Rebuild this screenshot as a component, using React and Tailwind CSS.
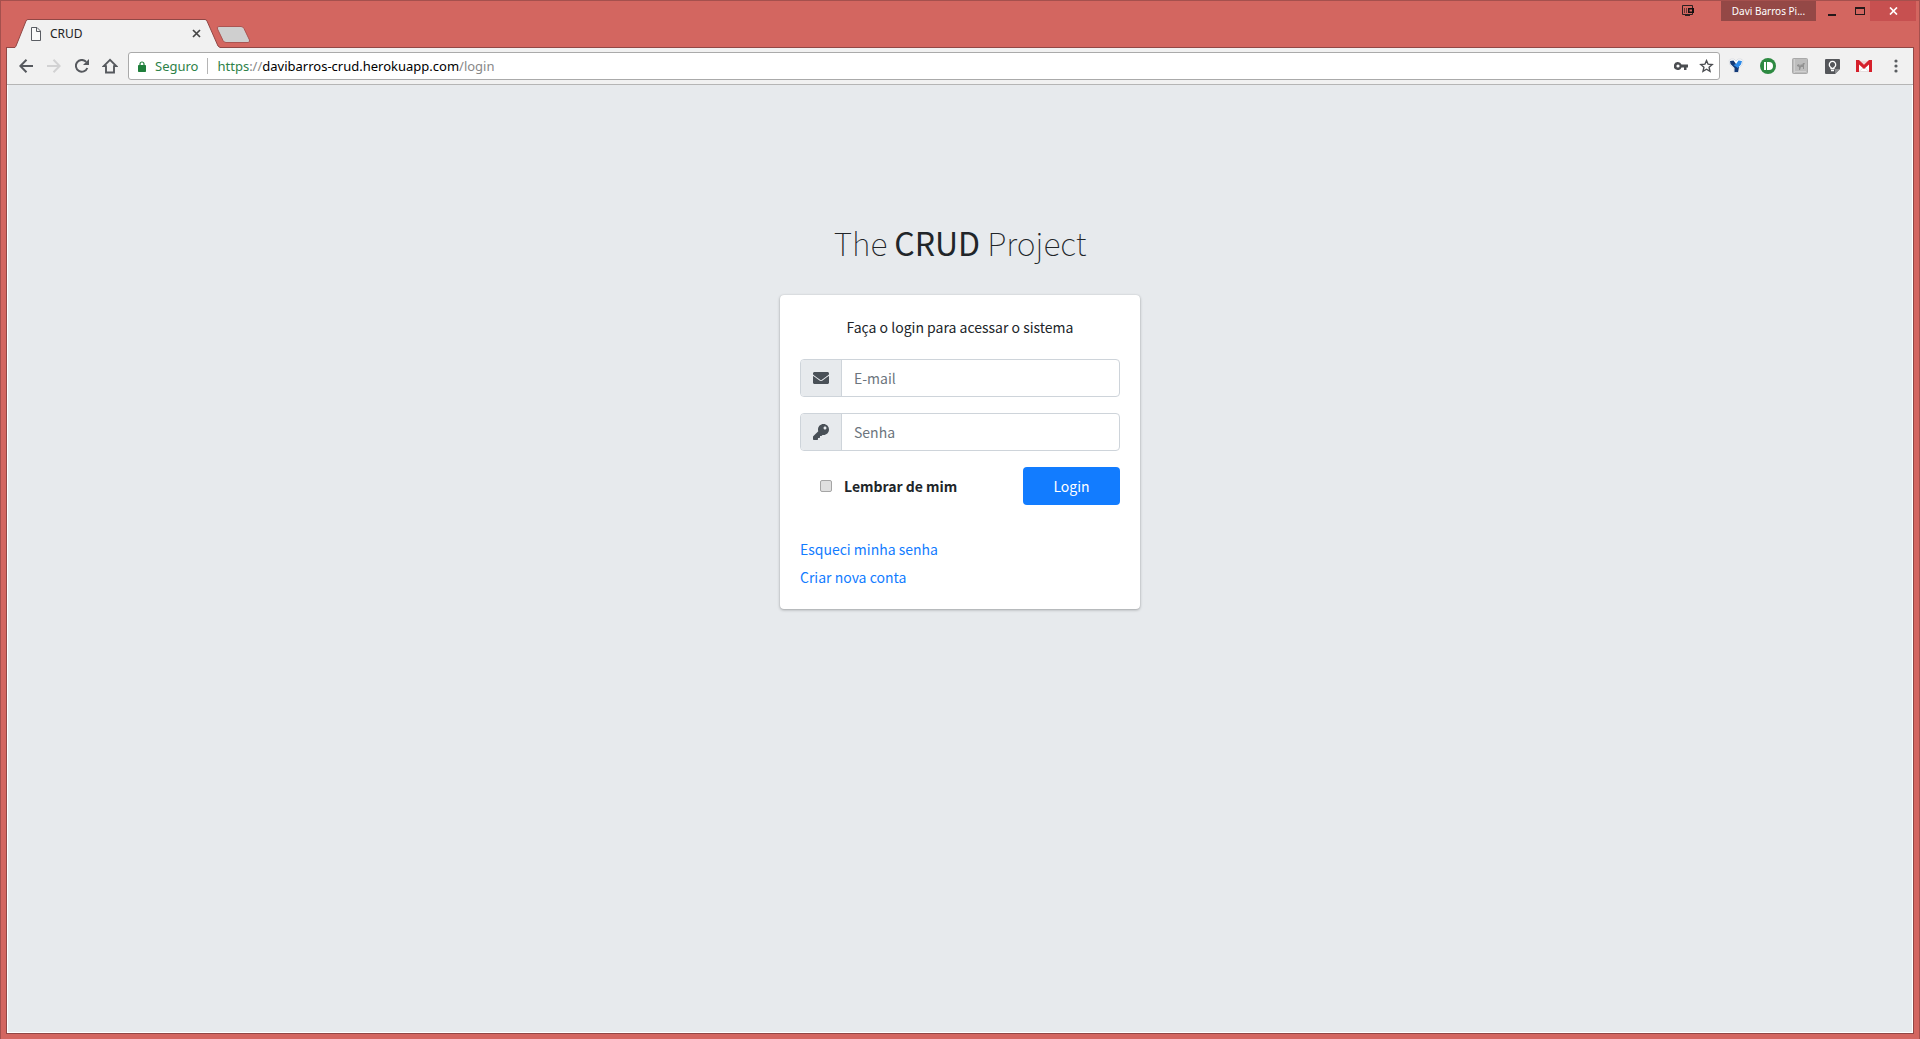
import React from "react";

const ui = "font-['Noto_Sans','Open_Sans',sans-serif]";
const body = "font-['Noto_Sans_CJK_SC',sans-serif]";

function IconButton({ label, children, className = "" }) {
  return (
    <button type="button" aria-label={label} className={"flex h-7 w-7 shrink-0 items-center justify-center " + className}>
      {children}
    </button>
  );
}

function TabStrip() {
  return (
    <header className={"flex h-[47px] shrink-0 items-start justify-between " + ui}>
      <div className="flex self-end pl-2">
        <div className="relative z-10 flex h-[29px] w-[206px] items-center px-4 text-xs text-[#222]">
          <svg className="absolute inset-0 h-full w-full" viewBox="0 0 206 29" preserveAspectRatio="none" aria-hidden="true">
            <path d="M0 29V28.5L2 27L12 2Q12.500 .5 14 .5H191Q192.500 .5 193 2L204 27L206 28.5V29Z" fill="#f1f1f1" />
            <path d="M0 28.5H1L2 27L12 2Q12.500 .5 14 .5H191Q192.500 .5 193 2L204 27L206 28.5" fill="none" stroke="#914745" />
          </svg>
          <svg className="relative" width="12" height="14" viewBox="0 0 12 14" fill="#fafafa" stroke="#5a5d63" aria-hidden="true">
            <path d="M1.5.5H7L10.500 4V13.500H1.500ZM6.500 1V4.500H10" />
          </svg>
          <span className="relative ml-2 flex-1">CRUD</span>
          <button type="button" aria-label="Fechar guia" className="relative flex h-4 w-4 items-center justify-center">
            <svg width="9" height="9" viewBox="0 0 9 9" stroke="#454545" strokeWidth="1.7" aria-hidden="true">
              <path d="M1 1L8 8M8 1L1 8" />
            </svg>
          </button>
        </div>
        <button type="button" aria-label="Nova guia" className="-ml-1 mt-[7px] h-[18px] w-[36px]">
          <svg width="36" height="18" viewBox="0 0 36 18" aria-hidden="true">
            <path d="M3 .5H25Q27 .5 28 2.500L33.500 14Q34 16.500 32 16.500H10Q8 16.500 7 14.500L1.500 3Q.5 .5 3 .5Z" fill="#cfcfcf" stroke="#ab5552" />
          </svg>
        </button>
      </div>
      <div className="-mr-0.5 flex h-5 items-center">
        <svg className="mr-[27px]" width="12" height="12" viewBox="0 0 12 12" fill="none" stroke="#2c2020" aria-hidden="true">
          <path d="M10.500 3V.5H.5V9.500H10.500V8M3 10.500H8" />
          <path d="M2.500 3V8M4.500 3V8M6.500 3V4" stroke="#6b3836" />
          <path d="M6 3H12V8H6ZM7.500 4.500V6.500H10V4.500Z" fill="#140f0f" fillRule="evenodd" stroke="none" />
        </svg>
        <button type="button" className="h-5 w-[95px] bg-[#944846] text-[10px] leading-5 text-white">Davi Barros Pi...</button>
        <IconButton label="Minimizar" className="ml-0.5">
          <svg width="8" height="12" viewBox="0 0 8 12" aria-hidden="true"><path d="M0 9H8V11H0Z" fill="#24191a" /></svg>
        </IconButton>
        <IconButton label="Maximizar" className="-mr-1">
          <svg width="10" height="8" viewBox="0 0 10 8" aria-hidden="true"><path d="M0 0H10V8H0ZM1 2V7H9V2Z" fillRule="evenodd" fill="#24191a" /></svg>
        </IconButton>
        <button type="button" aria-label="Fechar" className="flex h-5 w-[46px] items-center justify-center bg-[#c75050]">
          <svg width="9" height="8" viewBox="0 0 9 8" stroke="#fff" strokeWidth="1.7" aria-hidden="true"><path d="M1 .5L8 7.500M8 .5L1 7.500" /></svg>
        </button>
      </div>
    </header>
  );
}

function Extensions() {
  return (
    <div className="flex items-center gap-1">
      <IconButton label="Extensão Y">
        <svg width="16" height="16" viewBox="0 0 16 16" aria-hidden="true">
          <path d="M1 2.500L3 1H6L8 3L10 1H13L15 2.500L14 7L10.500 10.500V14.500H6V10.500L2 7Z" fill="#fff" stroke="#dcdfe4" strokeLinejoin="round" />
          <path d="M2 3L5.500 2.500L8 6L11 9L10 14H6.500V10L2.500 6Z" fill="#123a78" />
          <path d="M10.500 2.500L14 3L13 6.500L9.800 10L5.500 7L8 6Z" fill="#2d8ae8" />
        </svg>
      </IconButton>
      <IconButton label="Pushbullet">
        <svg width="16" height="16" viewBox="0 0 16 16" aria-hidden="true">
          <circle cx="8" cy="8" r="8" fill="#2d8a42" />
          <path d="M4 4H6V12H4ZM7 4H9A4 4 0 0 1 9 12H7Z" fill="#fff" />
        </svg>
      </IconButton>
      <IconButton label="Extensão inativa">
        <svg width="16" height="16" viewBox="0 0 16 16" aria-hidden="true">
          <rect x=".5" y=".5" width="15" height="15" rx="1" fill="#bdbdbd" stroke="#a9a9a9" />
          <path d="M2.500 1V15" stroke="#cfcfcf" />
          <path d="M5 7L7 6L8 8L9 6L10 7L11 5L13 5L12 7V11H11V9L9 9L8 12H7V9L5 8Z" fill="#929292" />
          <path d="M3 13.500H14" stroke="#d0d0d0" />
        </svg>
      </IconButton>
      <IconButton label="Google Keep">
        <svg width="15" height="15" viewBox="0 0 15 15" aria-hidden="true">
          <path d="M1 0H14Q15 0 15 1V10L10 15H1Q0 15 0 14V1Q0 0 1 0Z" fill="#55575b" />
          <path d="M10 15V10H15Z" fill="#898b8e" />
          <path d="M6 9.500V8.500A3.200 3.200 0 1 1 9 8.500V9.500ZM6 11.500H9" fill="none" stroke="#fff" strokeWidth="1.300" />
        </svg>
      </IconButton>
      <IconButton label="Gmail">
        <svg width="16" height="12" viewBox="0 0 16 12" aria-hidden="true">
          <rect width="16" height="12" rx="1" fill="#fff" />
          <path d="M3 .5H13L8 5Z" fill="#eed6d6" />
          <path d="M3 11.500L7 8M13 11.500L9 8M3 11.600H13" fill="none" stroke="#dcd3d3" strokeWidth=".8" />
          <path d="M0 0H3L8 4.800L13 0H16V12H13V4.500L8 9L3 4.500V12H0Z" fill="#d6202b" />
        </svg>
      </IconButton>
      <IconButton label="Menu">
        <svg width="4" height="14" viewBox="0 0 4 14" fill="#5a5d61" aria-hidden="true">
          <circle cx="2" cy="2" r="1.600" /><circle cx="2" cy="7" r="1.600" /><circle cx="2" cy="12" r="1.600" />
        </svg>
      </IconButton>
    </div>
  );
}

function Toolbar() {
  return (
    <nav className={"flex h-[37px] shrink-0 items-center border-b border-[#b5b5b5] bg-[#f1f1f1] pl-[5px] pr-[3px] " + ui}>
      <IconButton label="Voltar">
        <svg width="14" height="14" viewBox="0 0 14 14" fill="none" stroke="#56595e" strokeWidth="2" aria-hidden="true"><path d="M14 7H1.500M7.500 .8L1.300 7L7.500 13.200" /></svg>
      </IconButton>
      <IconButton label="Avançar">
        <svg width="14" height="14" viewBox="0 0 14 14" fill="none" stroke="#d2d2d3" strokeWidth="2" aria-hidden="true"><path d="M0 7H12.500M6.500 .8L12.700 7L6.500 13.200" /></svg>
      </IconButton>
      <IconButton label="Recarregar">
        <svg width="14" height="14" viewBox="0 0 14 14" aria-hidden="true">
          <path d="M12.300 9A5.900 5.900 0 1 1 11.200 2.900" fill="none" stroke="#56595e" strokeWidth="2" />
          <path d="M14 0V6H8Z" fill="#56595e" />
        </svg>
      </IconButton>
      <IconButton label="Página inicial">
        <svg width="16" height="16" viewBox="0 0 16 16" fill="none" stroke="#56595e" strokeWidth="1.900" aria-hidden="true"><path d="M8 1.800L1.700 8.100H4V14.500H12V8.100H14.300Z" /></svg>
      </IconButton>
      <div className="ml-1 mr-0.5 flex h-7 flex-1 items-center rounded-[3px] border border-[#aaa] bg-white pl-[9px] text-[13px] leading-5">
        <svg width="8" height="11" viewBox="0 0 8 11" aria-hidden="true">
          <path d="M2 5V3A2 2 0 0 1 6 3V5" fill="none" stroke="#1f7f3b" strokeWidth="1.200" />
          <rect y="4" width="8" height="7" rx=".7" fill="#1f7f3b" />
        </svg>
        <span className="ml-[9px] text-[#2d8148]">Seguro</span>
        <span className="ml-[9px] mr-[9px] h-4 w-px bg-[#b5b5b5]" />
        <span className="flex-1 text-[#888]"><span className="text-[#2d8148]">https</span>://<span className="text-black">davibarros-crud.herokuapp.com</span>/login</span>
        <button type="button" aria-label="Senhas salvas" className="flex h-6 w-6 items-center justify-center">
          <svg width="14" height="8" viewBox="0 0 14 8" aria-hidden="true">
            <path d="M4 0A4 4 0 1 0 7.500 5.500H10V8H12.500V5.500H14V2.500H7.500A4 4 0 0 0 4 0ZM4 2.400A1.600 1.600 0 1 1 4 5.600A1.600 1.600 0 0 1 4 2.400Z" fillRule="evenodd" fill="#4b4d51" />
          </svg>
        </button>
        <button type="button" aria-label="Favoritar" className="flex h-6 w-[26px] items-center justify-center">
          <svg width="15" height="14" viewBox="0 0 15 14" fill="none" stroke="#4b4d51" strokeWidth="1.400" aria-hidden="true"><path d="M7.500 1.600L9.100 5.200L13.200 5.600L10.100 8.300L11 12.300L7.500 10.200L4 12.300L4.900 8.300L1.800 5.600L5.900 5.200Z" /></svg>
        </button>
      </div>
      <Extensions />
    </nav>
  );
}

function Field({ id, type, label, icon }) {
  return (
    <div className="mb-4 flex h-[38px] overflow-hidden rounded border border-[#ced4da] bg-white">
      <label htmlFor={id} aria-label={label} className="flex w-[41px] shrink-0 items-center justify-center border-r border-[#ced4da] bg-[#e7eaed] text-[#495057]">
        {icon}
      </label>
      <input id={id} type={type} placeholder={label} className="w-full min-w-0 flex-1 bg-transparent px-3 text-sm leading-6 text-[#495057] outline-none placeholder:text-[#6c757d]" />
    </div>
  );
}

const envelope = (
  <svg width="16" height="16" viewBox="0 0 512 512" fill="currentColor" aria-hidden="true">
    <path d="M502.300 190.800c3.900-3.100 9.700-.2 9.700 4.700V400c0 26.500-21.500 48-48 48H48c-26.500 0-48-21.500-48-48V195.600c0-5 5.700-7.800 9.700-4.700 22.400 17.400 52.100 39.500 154.100 113.600 21.100 15.400 56.700 47.800 92.200 47.600 35.700.3 72-32.800 92.300-47.600 102-74.100 131.600-96.300 154-113.700zM256 320c23.200.4 56.600-29.200 73.400-41.400 132.700-96.300 142.800-104.700 173.400-128.700 5.800-4.500 9.200-11.500 9.200-18.900v-19c0-26.500-21.500-48-48-48H48c-26.500 0-48 21.500-48 48v19c0 7.400 3.400 14.300 9.200 18.900 30.600 23.900 40.700 32.400 173.400 128.700 16.800 12.200 50.200 41.800 73.400 41.400z" />
  </svg>
);

const key = (
  <svg width="16" height="16" viewBox="0 0 512 512" fill="currentColor" aria-hidden="true">
    <path d="M512 176c0 97.200-78.800 176-176 176-11.200 0-22.200-1.100-32.800-3.100l-24 27A24 24 0 0 1 261.200 384H224v40c0 13.300-10.700 24-24 24h-40v40c0 13.300-10.700 24-24 24H24c-13.300 0-24-10.700-24-24v-78.100c0-6.400 2.500-12.500 7-17l161.800-161.800C162.900 213.800 160 195.300 160 176 160 78.800 238.800 0 336 0c97.500 0 176 78.500 176 176zM336 128c0 26.500 21.500 48 48 48s48-21.500 48-48-21.500-48-48-48-48 21.500-48 48z" />
  </svg>
);

function LoginPage() {
  return (
    <main className={"flex flex-1 flex-col items-center border-x border-b border-white bg-[#e7eaed] pt-[7%] text-sm leading-6 text-[#212529] " + body}>
      <h1 className="mb-[29px] text-center text-[32px] font-thin leading-[48px]">
        The <b className="font-normal">CRUD</b> Project
      </h1>
      <section className="w-full max-w-[360px] rounded bg-white p-5 shadow-[0_0_1px_rgba(0,0,0,0.125),0_1px_3px_rgba(0,0,0,0.3)]">
        <p className="mb-5 text-center">Faça o login para acessar o sistema</p>
        <form onSubmit={(e) => e.preventDefault()}>
          <Field id="email" type="email" label="E-mail" icon={envelope} />
          <Field id="senha" type="password" label="Senha" icon={key} />
          <div className="flex items-center justify-between pl-5">
            <label className="flex items-center font-bold">
              <input type="checkbox" className="mr-3 h-3 w-3 appearance-none rounded-[2px] border border-[#a5a5a5] bg-[#dfdfdf] checked:bg-[#007bff]" />
              Lembrar de mim
            </label>
            <button type="submit" className="h-[38px] w-[97px] rounded bg-[#127cff] text-white">Login</button>
          </div>
        </form>
        <div className="mt-8 flex flex-col items-start gap-1 text-[#127cff]">
          <a href="#senha">Esqueci minha senha</a>
          <a href="#conta">Criar nova conta</a>
        </div>
      </section>
    </main>
  );
}

export default function App() {
  return (
    <div className="flex min-h-screen flex-col border-x border-t border-[#a5504d] bg-[#d36660]">
      <div className="flex flex-1 flex-col px-[5px] pb-[5px]">
        <TabStrip />
        <div className="-mt-px flex flex-1 flex-col border border-[#914745]">
          <Toolbar />
          <LoginPage />
        </div>
      </div>
    </div>
  );
}
